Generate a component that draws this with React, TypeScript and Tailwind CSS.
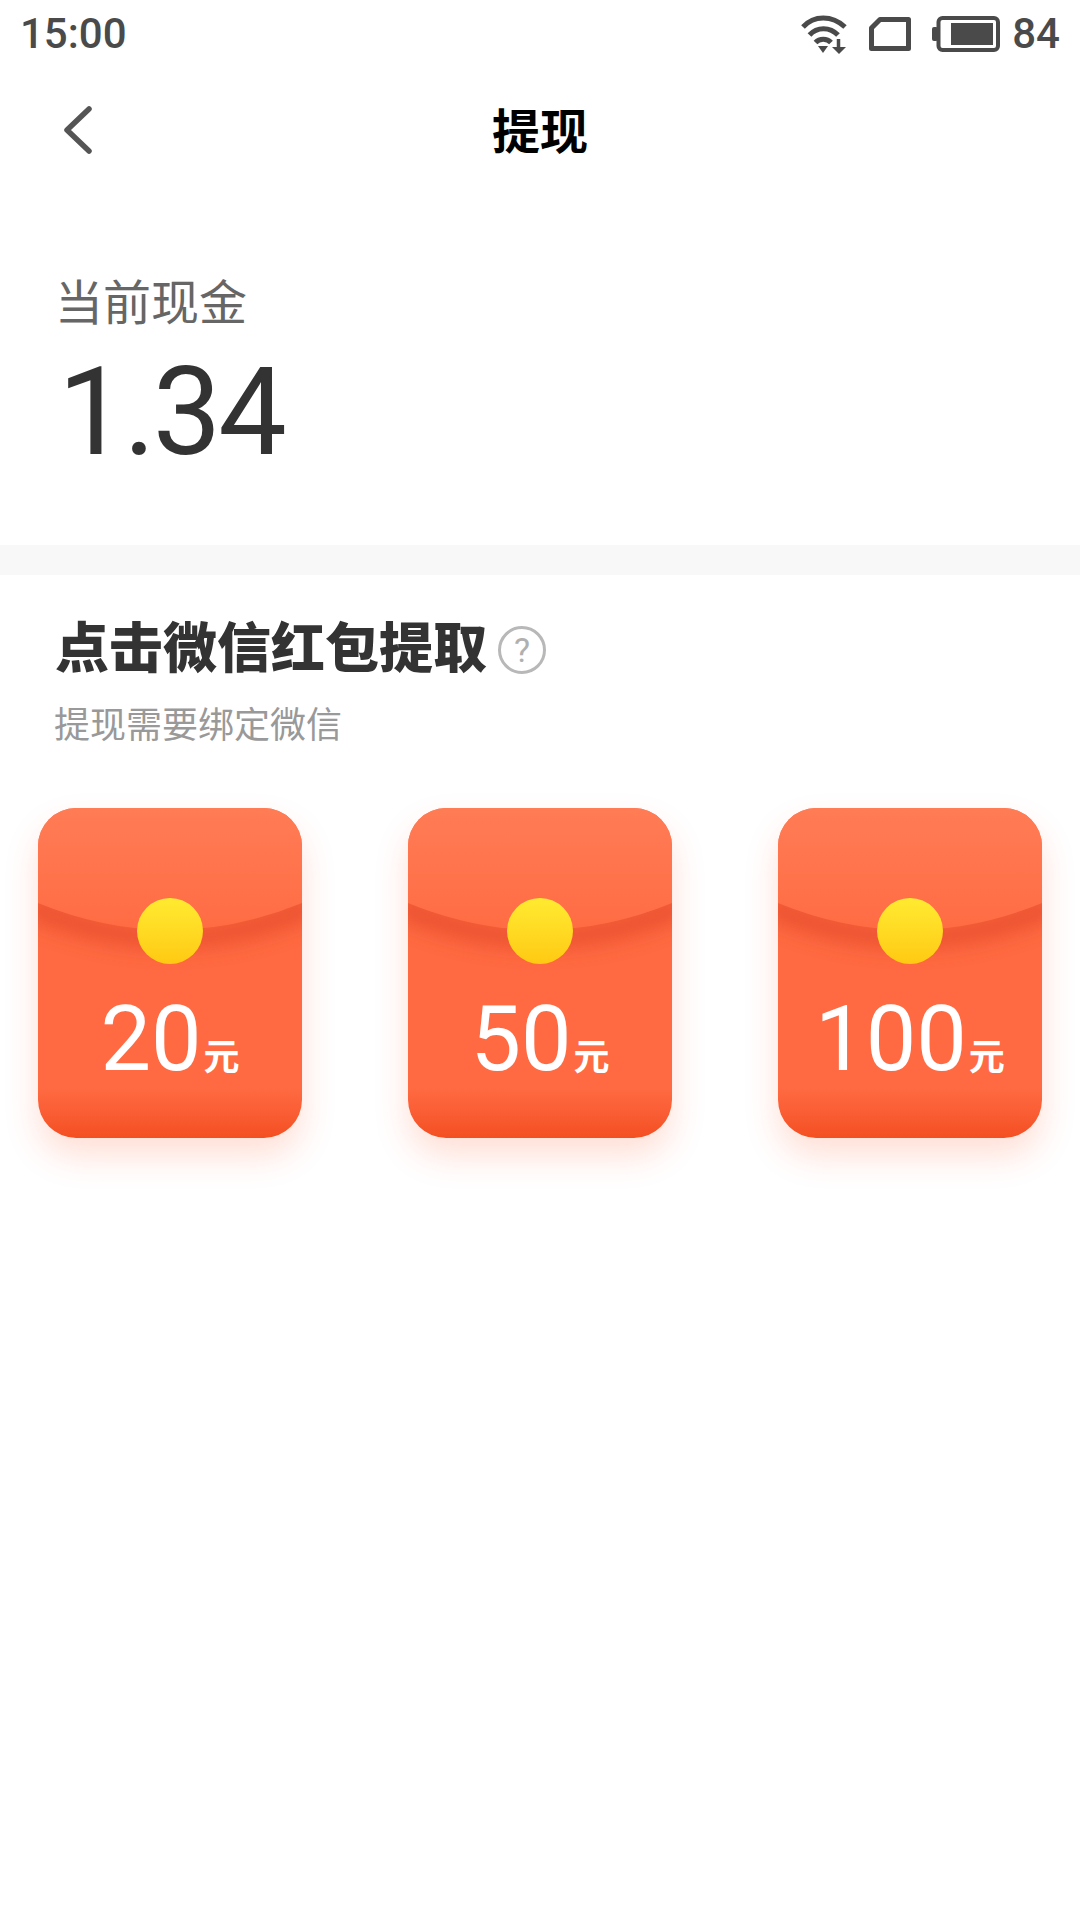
import React from "react";

const cjk = "font-['Roboto','Noto_Sans_CJK_SC',sans-serif]";

const StatusIcons = () => (
    <div className="flex items-center text-[#4a4a4a]">
        {/* wifi */}
        <svg width="46" height="40" viewBox="0 0 46 40" fill="none" stroke="#4a4a4a" strokeWidth="5">
            <path d="M2 13 C13 1 31 1 44 13" />
            <path d="M8.5 21 C16 12.5 29 12.5 37 21" />
            <path d="M14.5 28.5 C18.5 24 26 24 30 28.5" />
            <path d="M17 32 L27 32 L22 39 Z" fill="#4a4a4a" stroke="none" />
            <path d="M37.5 25 V35" strokeWidth="3.5" />
            <path d="M31 33 H45 L38 40 Z" fill="#4a4a4a" stroke="none" />
        </svg>
        {/* sim */}
        <svg className="ml-[22px]" width="42" height="34" viewBox="0 0 42 34" fill="none">
            <path d="M11 2.5 H39.5 V31.5 H2.5 V11 Z" stroke="#4a4a4a" strokeWidth="5" strokeLinejoin="round" />
        </svg>
        {/* battery */}
        <svg className="ml-[21px]" width="68" height="36" viewBox="0 0 68 36" fill="none">
            <rect x="0" y="11" width="6" height="14" rx="2" fill="#4a4a4a" />
            <rect x="6.5" y="2" width="59.5" height="32" rx="4" stroke="#4a4a4a" strokeWidth="4" />
            <rect x="19" y="7" width="42" height="22" fill="#4a4a4a" />
        </svg>
        <span className="ml-[12px] text-[42px] leading-none font-medium font-['Roboto',sans-serif]">84</span>
    </div>
);

const RedPacket = ({ amount }: { amount: number }) => (
    <div className="relative h-[330px] w-[264px] rounded-[38px] bg-gradient-to-b from-[#ff6a42] from-85% to-[#f44f21] shadow-[0_18px_34px_rgba(255,95,50,0.2)]">
        <div className="absolute inset-0 overflow-hidden rounded-[38px]">
            <svg width="264" height="170" viewBox="0 0 264 170" fill="none">
                <defs>
                    <linearGradient id={`flap${amount}`} x1="0" y1="0" x2="0" y2="1">
                        <stop offset="0" stopColor="#ff7c55" />
                        <stop offset="1" stopColor="#ff6c44" />
                    </linearGradient>
                    <filter id={`blur${amount}`} x="-10%" y="-20%" width="120%" height="160%">
                        <feGaussianBlur stdDeviation="10" />
                    </filter>
                </defs>
                <path d="M-10 85 Q132 155 274 85 V110 Q132 170 -10 110 Z" fill="#dc4022" opacity="0.6" filter={`url(#blur${amount})`} />
                <path d="M0 0 H264 V95 Q132 149 0 95 Z" fill={`url(#flap${amount})`} />
            </svg>
        </div>
        {/* coin */}
        <div className="absolute left-[99px] top-[90px] h-[66px] w-[66px] rounded-full bg-gradient-to-b from-[#ffeb30] to-[#ffc912]" />
        <div className="absolute inset-x-0 top-[185px] flex items-baseline justify-center text-white">
            <span className="text-[90px] leading-[94px] font-['Roboto',sans-serif]">{amount}</span>
            <span className={`ml-[2px] text-[36px] leading-none font-bold ${cjk}`}>元</span>
        </div>
    </div>
);

export default function App() {
    return (
        <div className={`flex min-h-[1920px] w-[1080px] flex-col bg-white ${cjk}`}>
            <div className="flex h-[66px] items-center justify-between pl-[20px] pr-[20px] pt-[2px]">
                <span className="text-[42px] leading-none font-medium text-[#4a4a4a] font-['Roboto',sans-serif]">15:00</span>
                <StatusIcons />
            </div>

            <div className="relative flex h-[130px] items-center justify-center pt-[4px]">
                <svg className="absolute left-[61px] top-[38px]" width="32" height="52" viewBox="0 0 32 52" fill="none">
                    <path d="M28 5 L6 26 L28 47" stroke="#555555" strokeWidth="5.5" strokeLinecap="round" strokeLinejoin="round" />
                </svg>
                <h1 className="text-[48px] leading-none font-bold text-black">提现</h1>
            </div>

            <div className="h-[349px] pl-[55px] pt-[76px]">
                <p className="text-[48px] leading-[64px] text-[#666666]">当前现金</p>
                <p className="ml-[3px] mt-[9px] text-[122px] leading-[136px] tracking-[-3px] text-[#333333] font-['Roboto',sans-serif]">1.34</p>
            </div>

            <div className="h-[30px] bg-[#f8f8f8]" />

            <div className="flex items-center pl-[55px] pt-[41px]">
                <h2 className="text-[54px] leading-[68px] font-black text-[#333333]">点击微信红包提取</h2>
                <span className="ml-[11px] flex h-[48px] w-[48px] items-center justify-center rounded-full border-[3px] border-[#b8b8b8] text-[34px] leading-none text-[#b0b0b0]">?</span>
            </div>
            <p className="pl-[54px] pt-[16px] text-[36px] leading-[52px] text-[#999999]">提现需要绑定微信</p>

            <div className="flex justify-between px-[38px] pt-[56px]">
                <RedPacket amount={20} />
                <RedPacket amount={50} />
                <RedPacket amount={100} />
            </div>
        </div>
    );
}
